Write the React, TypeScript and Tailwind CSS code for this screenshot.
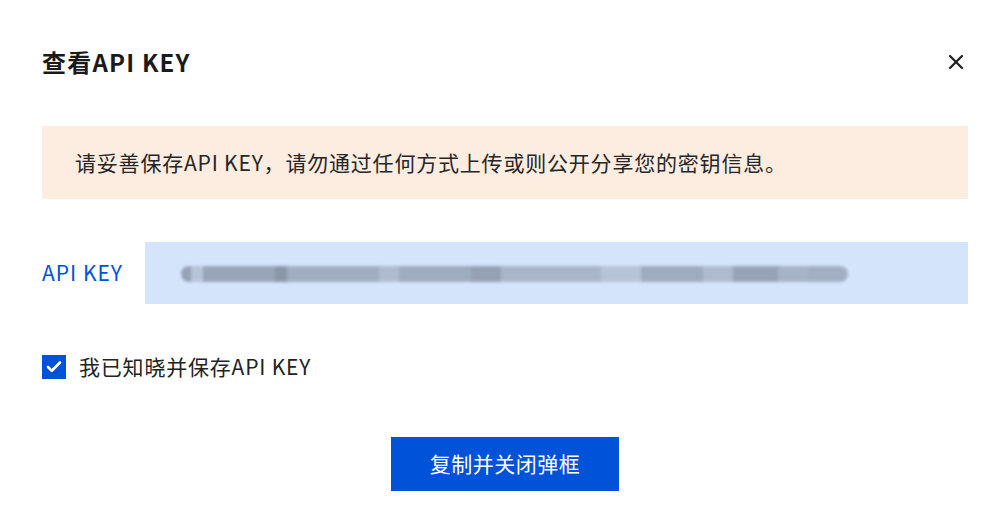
import { X, Check } from 'lucide-react';

const segments = [
  { w: 10, c: 'bg-[#8f9cb0]' },
  { w: 12, c: 'bg-[#b4c2d6]' },
  { w: 72, c: 'bg-[#939fb2]' },
  { w: 12, c: 'bg-[#848fa0]' },
  { w: 92, c: 'bg-[#9ca9bc]' },
  { w: 20, c: 'bg-[#abb8cc]' },
  { w: 72, c: 'bg-[#99a6b9]' },
  { w: 30, c: 'bg-[#8f9bad]' },
  { w: 100, c: 'bg-[#a5b2c5]' },
  { w: 40, c: 'bg-[#b3c1d4]' },
  { w: 62, c: 'bg-[#99a6b9]' },
  { w: 30, c: 'bg-[#aab7ca]' },
  { w: 45, c: 'bg-[#919eb0]' },
  { w: 30, c: 'bg-[#a2afc2]' },
  { w: 40, c: 'bg-[#9daabd]' },
];

export default function App() {
  return (
    <div className="w-[1000px] h-[530px] bg-white font-['Noto_Sans_CJK_SC','Noto_Sans',sans-serif] text-[#1f1f1f] pl-[42px] pr-[32px] pt-[44px]">
      <div className="flex items-center justify-between">
        <h2 className="text-[24px] font-bold leading-9 tracking-[1.2px] text-[#1a1a1a]">查看API KEY</h2>
        <button className="text-[#222]">
          <X className="h-6 w-6" strokeWidth={2.3} />
        </button>
      </div>

      <div className="mt-[46px] h-[73px] bg-[#fdece0] flex items-center pl-[33px]">
        <p className="text-[21px] tracking-[0.8px] text-[#262626]">请妥善保存API KEY，请勿通过任何方式上传或则公开分享您的密钥信息。</p>
      </div>

      <div className="mt-[43px] flex items-center">
        <span className="w-[103px] text-[21px] tracking-[1px] text-[#0052d9]">API KEY</span>
        <div className="flex-1 h-[62px] bg-[#d4e4fb] flex items-center pl-[36px] overflow-hidden">
          <div className="flex h-[16px] mt-[2px] blur-[1.5px] opacity-90 rounded-full overflow-hidden">
            {segments.map((s, i) => (
              <div key={i} className={s.c} style={{ width: s.w }} />
            ))}
          </div>
        </div>
      </div>

      <label className="mt-[47px] flex items-center gap-[13px]">
        <span className="h-6 w-6 bg-[#0052d9] flex items-center justify-center">
          <Check className="h-[18px] w-[18px] text-white" strokeWidth={3.5} />
        </span>
        <span className="text-[21px] tracking-[0.8px] text-[#222]">我已知晓并保存API KEY</span>
      </label>

      <div className="mt-[54px] flex justify-center">
        <button className="w-[228px] h-[54px] bg-[#0052d9] text-white text-[21px] tracking-[0.5px]">复制并关闭弹框</button>
      </div>
    </div>
  );
}
